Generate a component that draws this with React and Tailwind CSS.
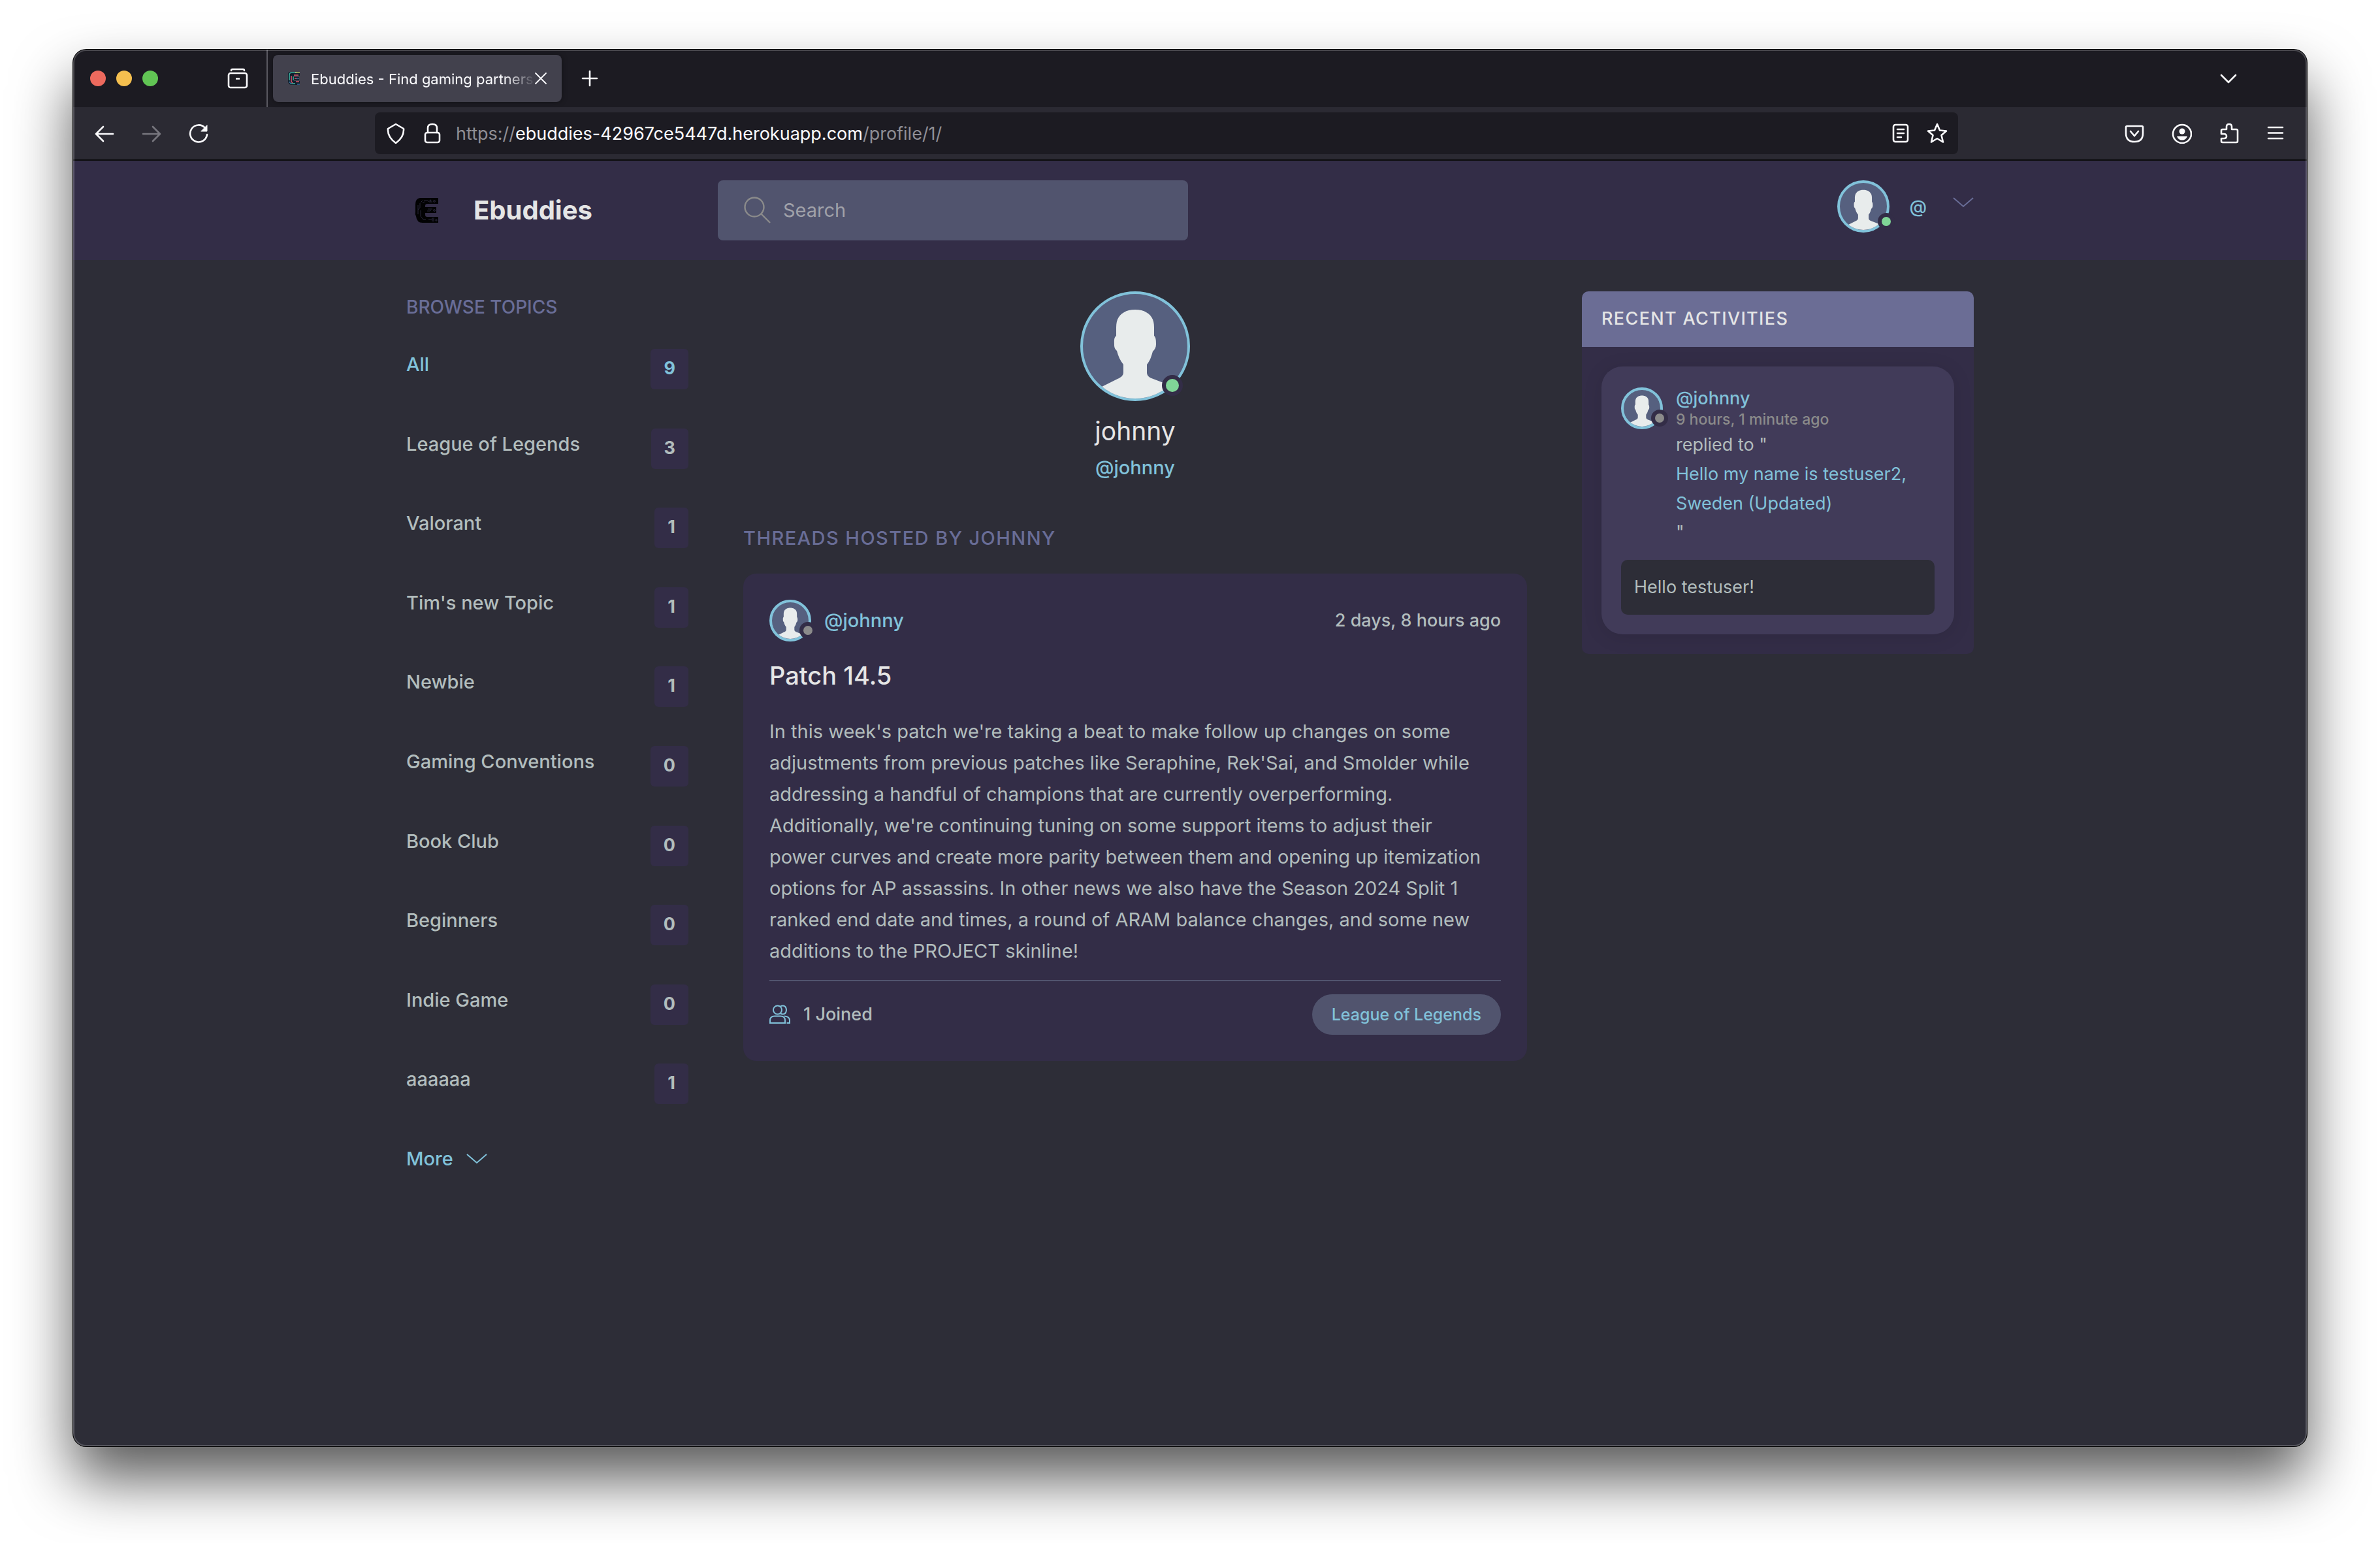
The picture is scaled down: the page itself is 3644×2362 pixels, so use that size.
import React from "react";

const topics = [
  ["All", 9],
  ["League of Legends", 3],
  ["Valorant", 1],
  ["Tim's new Topic", 1],
  ["Newbie", 1],
  ["Gaming Conventions", 0],
  ["Book Club", 0],
  ["Beginners", 0],
  ["Indie Game", 0],
  ["aaaaaa", 1],
];

function Icon({ children, className = "size-8", label, box = 32, width = 2.6 }) {
  return (
    <svg
      viewBox={`0 0 ${box} ${box}`}
      className={className}
      fill="none"
      stroke="currentColor"
      strokeWidth={width}
      strokeLinecap="round"
      strokeLinejoin="round"
      aria-hidden={label ? undefined : true}
      aria-label={label}
    >
      {children}
    </svg>
  );
}

function IconButton({ label, children, className = "" }) {
  return (
    <button type="button" aria-label={label} className={`shrink-0 ${className}`}>
      <Icon>{children}</Icon>
    </button>
  );
}

const avatarSizes = {
  sm: "size-16",
  md: "size-20",
  lg: "size-[168px]",
};

function Avatar({ size, online }) {
  const dot =
    size === "lg"
      ? "size-8 right-[11px] bottom-2 border-[6px]"
      : "size-[26px] -right-2 bottom-1 border-[6px]";
  return (
    <span className={`relative block shrink-0 ${avatarSizes[size]}`}>
      <span className="block size-full overflow-hidden rounded-full border-4 border-[#81c2da] bg-[#56607f]">
        <svg viewBox="4 4 160 160" className="size-full" aria-hidden="true">
          <path
            fill="#e8ecec"
            d="M84 28C70 28 61 34 57 43C55 48 55 53 55 58V68C51 71 52 77 52 82C52 87 54 89 56 91C58 99 61 106 66 112V124C66 129 62 132 57 134L33 146L20 158V172H148V154L135 143L109 133C104 131 102 128 102 124V112C107 106 109 99 111 92C114 89 116 86 116 81C116 76 116 71 113 68V58C113 53 113 48 111 43C107 34 98 28 84 28Z"
          />
        </svg>
      </span>
      <span
        className={`absolute rounded-full border-[#332d47] ${dot} ${online ? "bg-[#80d697]" : "bg-[#8b8b8b]"}`}
      />
    </span>
  );
}

function Chevron({ className }) {
  return (
    <svg viewBox="0 0 32 16" className={className} fill="none" stroke="currentColor" strokeWidth="2" aria-hidden="true">
      <path d="M1 1L16 14L31 1" />
    </svg>
  );
}

function Logo() {
  return (
    <svg viewBox="0 0 36 40" className="h-10 w-9" aria-hidden="true">
      <path
        fill="#020203"
        d="M8 1H36V10H19Q16 10 16 13V15H33V24H16V27Q16 30 19 30H36V39H12Q3 39 2 29Q0 26 1 22V11Q1 2 8 1Z"
      />
      <g fill="none" stroke="#34304a" strokeWidth="0.8">
        <path d="M5 12V26M8 9V16L5 19M9 20V29L13 34H17M12 5L9 8M14 5H20L22 7H27M12 8L15 7M20 18H27M19 21H23L25 20M21 34H25L27 32H30" />
        <circle cx="30" cy="6" r="1.4" />
        <circle cx="24" cy="5" r="1" />
        <circle cx="30" cy="20" r="1.4" />
        <circle cx="28" cy="35" r="1.4" />
        <circle cx="33" cy="35" r="1.2" />
      </g>
    </svg>
  );
}

function Favicon() {
  return (
    <svg viewBox="0 0 32 32" className="size-8 shrink-0" aria-hidden="true">
      <path fill="#10202c" d="M10 6H25V12H16V14H24V18H16V20H25V26H12Q7 25 7 20V10Q7 6 10 6Z" />
      <path fill="none" stroke="#3fb3a2" strokeWidth="1.5" d="M9 19V11Q9 7 13 7H20M15 13V19M12 24H18" />
      <path fill="none" stroke="#b9c96a" strokeWidth="1.4" d="M18 7H25" />
      <path fill="none" stroke="#e0556e" strokeWidth="1.5" d="M12 12V21L14 23M16 11H23M17 16H20M19 21H24" />
      <path fill="none" stroke="#4a8fd0" strokeWidth="1.2" d="M20 16H24M21 25H25M9 21L11 24" />
    </svg>
  );
}

function BrowserChrome() {
  return (
    <div className="text-[#fbfbfe]">
      <div className="flex h-[88px] items-center bg-[#1c1b22] pr-[104px] pl-[26px]">
        <div className="flex gap-4">
          <button type="button" aria-label="Close window" className="size-6 rounded-full bg-[#ed6a5e]" />
          <button type="button" aria-label="Minimize window" className="size-6 rounded-full bg-[#f5bf4f]" />
          <button type="button" aria-label="Zoom window" className="size-6 rounded-full bg-[#61c554]" />
        </div>
        <IconButton label="Firefox View" className="ml-[106px]">
          <path d="M6 4Q6 2 8 2H24Q26 2 26 4" />
          <rect x="2" y="8" width="28" height="22" rx="3" />
          <path d="M13 16.5H19" strokeLinecap="butt" />
        </IconButton>
        <div className="ml-7 h-full w-0.5 bg-[#5b5a62]" />
        <div className="ml-2 flex h-[72px] w-[442px] items-center rounded-lg bg-[#42414d] pr-4 pl-4 shadow-[0_0_8px_rgba(0,0,0,0.4)]">
          <Favicon />
          <span className="-mr-2 ml-[10px] flex-1 pt-0.5 text-[22px] leading-8 whitespace-nowrap [mask-image:linear-gradient(to_right,black_86%,transparent)]">
            Ebuddies - Find gaming partners
          </span>
          <button type="button" aria-label="Close tab" className="shrink-0">
            <Icon className="size-8" width={1.8}>
              <path d="M8 8L24 24M24 8L8 24" />
            </Icon>
          </button>
        </div>
        <IconButton label="New tab" className="ml-[27px]">
          <path d="M16 5V27M5 16H27" />
        </IconButton>
        <IconButton label="List all tabs" className="ml-auto">
          <path d="M5 11L16 22L27 11" />
        </IconButton>
      </div>
      <div className="flex h-[82px] items-center border-b-2 border-[#0c0c0d] bg-[#2b2a33] pr-8 pl-8">
        <div className="flex gap-10">
          <IconButton label="Back">
            <path d="M29 17H3M14 6L3 17L14 28" />
          </IconButton>
          <IconButton label="Forward" className="text-[#77767e]">
            <path d="M3 17H29M18 6L29 17L18 28" />
          </IconButton>
          <IconButton label="Reload">
            <path d="M26 8A13 13 0 1 0 29 18" />
            <path d="M29 4V13H20Z" fill="currentColor" strokeWidth="1" />
          </IconButton>
        </div>
        <div className="mr-[254px] ml-[254px] flex h-16 min-w-0 flex-1 items-center rounded-lg bg-[#1c1b22] px-4">
          <IconButton label="Tracking protection">
            <path d="M16 2L28 9Q29 22 16 31Q3 22 4 9Z" />
          </IconButton>
          <IconButton label="Site information" className="ml-6">
            <rect x="5" y="15" width="22" height="15" rx="3" />
            <path d="M9 15V8Q9 2 16 2Q23 2 23 8V15" />
          </IconButton>
          <div
            role="textbox"
            aria-label="Address"
            className="ml-5 min-w-0 flex-1 truncate pt-0.5 text-[27px] leading-9 text-[#8f8e95]"
          >
            https://<span className="text-[#fbfbfe]">ebuddies-42967ce5447d.herokuapp.com</span>/profile/1/
          </div>
          <IconButton label="Reader view">
            <rect x="5" y="3" width="22" height="26" rx="3" />
            <path d="M11 10H21M11 16H21M11 22H17" />
          </IconButton>
          <IconButton label="Bookmark this page" className="ml-6">
            <path d="M16 2L20 11.5L30 12.5L22.5 19L25 29.5L16 24L7 29.5L9.500 19L2 12.500L12 11.500Z" />
          </IconButton>
        </div>
        <div className="flex gap-10">
          <IconButton label="Save to Pocket">
            <path d="M3 7Q3 5 5 5H27Q29 5 29 7V16Q29 29 16 29Q3 29 3 16Z" />
            <path d="M10 13L16 20L22 13" />
          </IconButton>
          <IconButton label="Account">
            <circle cx="17" cy="17" r="14" />
            <circle cx="17" cy="13" r="4.500" fill="currentColor" stroke="none" />
            <path d="M9 20.500H25Q23 26.500 17 26.500Q11 26.500 9 20.500Z" fill="currentColor" stroke="none" />
          </IconButton>
          <IconButton label="Extensions">
            <path d="M5 17V12Q5 10 7 10H13V6Q13 2 17 2Q21 2 21 6V10H28Q30 10 30 12V28Q30 30 28 30H7Q5 30 5 28V24H9Q13 24 13 20.500Q13 17 9 17Z" />
          </IconButton>
          <IconButton label="Menu">
            <path d="M5 7H27M5 15.500H27M5 24H27" />
          </IconButton>
        </div>
      </div>
    </div>
  );
}

function SiteHeader() {
  return (
    <header className="bg-[#332d47] py-[30px]">
      <div className="mx-auto flex w-full max-w-[2400px]">
        <a href="#home" className="flex w-[477px] shrink-0 items-center pl-[13px]">
          <Logo />
          <span className="ml-[54px] text-[40px] leading-[60px] font-bold text-[#e5e5e5]">Ebuddies</span>
        </a>
        <form className="flex h-[92px] w-[30%] items-center rounded-lg bg-[#51546e] pl-10" role="search">
          <label htmlFor="search" aria-label="Search" className="shrink-0 text-[#8b8b8b]">
            <svg viewBox="0 0 42 42" className="size-[42px]" fill="none" stroke="currentColor" strokeWidth="2.400" aria-hidden="true">
              <circle cx="16" cy="16" r="14.500" />
              <path d="M26.500 26.500L40 40" />
            </svg>
          </label>
          <input
            id="search"
            type="text"
            placeholder="Search"
            className="ml-[18px] min-w-0 flex-1 bg-transparent text-[29px] leading-10 text-[#e5e5e5] outline-none placeholder:text-[#a0a1a9]"
          />
        </form>
        <div className="ml-auto flex h-20 items-center">
          <a href="#profile" className="flex items-center text-[#81c2da]">
            <Avatar size="md" online />
            <span className="ml-[30px] pt-0.5 text-[27px] leading-10 font-medium">@</span>
          </a>
          <button type="button" aria-label="Open menu" className="mb-3 ml-10 text-[#696d97]">
            <Chevron className="h-4 w-8" />
          </button>
        </div>
      </div>
    </header>
  );
}

function Topics() {
  return (
    <nav className="w-[18%]">
      <h2 className="text-[28px] leading-[48px] font-medium text-[#696d97]">BROWSE TOPICS</h2>
      <ul className="mt-[34px] grid min-h-[1216px] auto-rows-fr text-[29px] font-medium">
        {topics.map(([name, count], i) => (
          <li key={name}>
            <a
              href="#topic"
              className={`flex items-start justify-between leading-[60px] ${i === 0 ? "text-[#81c2da]" : ""}`}
            >
              {name}
              <span className="mt-1.5 rounded-md bg-[#332d47] px-5 pb-0.5 text-[27px] font-bold">{count}</span>
            </a>
          </li>
        ))}
      </ul>
      <a href="#more" className="flex items-center text-[29px] leading-[60px] font-medium text-[#81c2da]">
        More
        <Chevron className="ml-5 h-4 w-8" />
      </a>
    </nav>
  );
}

function Profile() {
  return (
    <main className="w-1/2">
      <div className="flex flex-col items-center">
        <Avatar size="lg" online />
        <h1 className="mt-4 text-[39px] leading-[60px] text-[#e5e5e5]">johnny</h1>
        <p className="text-[29px] leading-[52px] font-medium text-[#81c2da]">@johnny</p>
      </div>
      <h2 className="mt-15 text-[29px] leading-[44px] font-medium tracking-wider text-[#696d97]">
        THREADS HOSTED BY JOHNNY
      </h2>
      <article className="mt-8 rounded-[20px] bg-[#332d47] p-10">
        <div className="flex items-center justify-between">
          <a href="#profile" className="flex items-center text-[29px] leading-10 font-medium text-[#81c2da]">
            <Avatar size="sm" />
            <span className="ml-5">@johnny</span>
          </a>
          <span className="text-[27px] leading-10 font-medium">2 days, 8 hours ago</span>
        </div>
        <h3 className="mt-[22px] text-[38px] leading-[60px] font-medium text-[#e5e5e5]">
          <a href="#room">Patch 14.5</a>
        </h3>
        <p className="mt-8 pr-5 text-[29px] leading-[48px]">
          In this week's patch we're taking a beat to make follow up changes on some adjustments from previous patches
          like Seraphine, Rek'Sai, and Smolder while addressing a handful of champions that are currently
          overperforming. Additionally, we're continuing tuning on some support items to adjust their power curves and
          create more parity between them and opening up itemization options for AP assassins. In other news we also
          have the Season 2024 Split 1 ranked end date and times, a round of ARAM balance changes, and some new
          additions to the PROJECT skinline!
        </p>
        <div className="mt-5 flex items-center justify-between border-t-2 border-[#51546e] pt-5">
          <span className="flex items-center text-[27px] leading-10 font-medium">
            <svg viewBox="0 0 32 32" className="size-8 text-[#81c2da]" fill="none" stroke="currentColor" strokeWidth="2" aria-hidden="true">
              <circle cx="12.500" cy="9" r="6.500" />
              <path d="M1 29V25Q1 18.500 8 18.500H17Q24 18.500 24 25V29Z" />
              <path d="M17 3.200Q25.500 0.500 26 9Q25.500 17.500 17 14.800" />
              <path d="M23 18.500Q31 19 31 25V29H26.500" />
            </svg>
            <span className="ml-5">1 Joined</span>
          </span>
          <a href="#topic" className="rounded-full bg-[#51546e] px-[30px] py-[11px] text-[25px] leading-10 font-medium text-[#81c2da]">
            League of Legends
          </a>
        </div>
      </article>
    </main>
  );
}

function Activities() {
  return (
    <aside className="w-1/4 self-start overflow-hidden rounded-[10px] bg-[#332d47]">
      <h2 className="bg-[#6b6d95] px-[30px] pt-5 pb-[21px] text-[27px] leading-[44px] font-medium tracking-wider text-[#e5e5e5]">
        RECENT ACTIVITIES
      </h2>
      <div className="p-[30px]">
        <div className="rounded-[32px] bg-[#413b59] px-[30px] pt-8 pb-[30px] shadow-[0_4px_30px_rgba(0,0,0,0.1)]">
          <div className="flex items-start text-[27px]">
            <Avatar size="sm" />
            <div className="ml-5 min-w-0 flex-1">
              <a href="#profile" className="block text-[27px] leading-[33px] font-medium text-[#81c2da]">
                @johnny
              </a>
              <p className="text-[23px] leading-[33px] font-medium text-[#8b8b8b]">9 hours, 1 minute ago</p>
              <p className="leading-[44px]">replied to "</p>
              <a href="#room" className="block leading-[45px] text-[#81c2da]">
                Hello my name is testuser2, Sweden (Updated)
              </a>
              <p className="leading-[44px]">"</p>
            </div>
          </div>
          <p className="mt-5 rounded-[10px] bg-[#2d2d37] px-5 py-5 text-[27px] leading-[44px]">Hello testuser!</p>
        </div>
      </div>
    </aside>
  );
}

export default function App() {
  return (
    <div className="flex min-h-screen bg-white px-28 pt-[76px] pb-[148px] font-['Inter',sans-serif]">
      <div className="relative flex min-w-0 flex-1 flex-col overflow-hidden rounded-[20px] bg-[#2d2d37] shadow-[0_0_0_1px_#000,0_50px_90px_rgba(0,0,0,0.65)]">
        <BrowserChrome />
        <SiteHeader />
        <div className="mx-auto flex w-full max-w-[2400px] justify-between pt-12 text-[#b2bdbd]">
          <Topics />
          <Profile />
          <Activities />
        </div>
        <div className="pointer-events-none absolute inset-0 rounded-[20px] border-2 border-white/20" />
      </div>
    </div>
  );
}
